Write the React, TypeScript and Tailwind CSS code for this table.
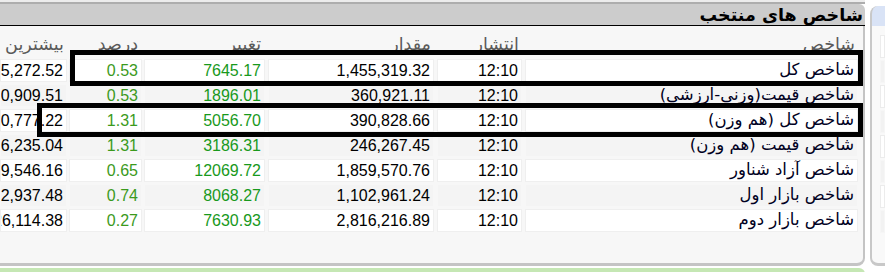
import React from "react";

interface IndexRow {
    name: string;
    time: string;
    value: string;
    change: string;
    pct: string;
    max: string;
}

const rows: IndexRow[] = [
    { name: "شاخص کل", time: "12:10", value: "1,455,319.32", change: "7645.17", pct: "0.53", max: "1,465,272.52" },
    { name: "شاخص قیمت(وزنی-ارزشی)", time: "12:10", value: "360,921.11", change: "1896.01", pct: "0.53", max: "360,909.51" },
    { name: "شاخص کل (هم وزن)", time: "12:10", value: "390,828.66", change: "5056.70", pct: "1.31", max: "390,777.22" },
    { name: "شاخص قیمت (هم وزن)", time: "12:10", value: "246,267.45", change: "3186.31", pct: "1.31", max: "246,235.04" },
    { name: "شاخص آزاد شناور", time: "12:10", value: "1,859,570.76", change: "12069.72", pct: "0.65", max: "1,869,546.16" },
    { name: "شاخص بازار اول", time: "12:10", value: "1,102,961.24", change: "8068.27", pct: "0.74", max: "1,102,937.48" },
    { name: "شاخص بازار دوم", time: "12:10", value: "2,816,216.89", change: "7630.93", pct: "0.27", max: "2,826,114.38" },
];

const num = "font-['Liberation_Sans','DejaVu_Sans',sans-serif] text-[16px]";

function Cell({ className, children, odd }: { className: string; children: React.ReactNode; odd: boolean }) {
    return (
        <div
            className={`${className} shrink-0 h-[23px] flex items-center justify-start overflow-hidden whitespace-nowrap pr-[3px] border ${
                odd ? "bg-[#f4f4f4] border-[#f7f7f7]" : "bg-white border-[#efefef]"
            }`}
        >
            {children}
        </div>
    );
}

export default function App() {
    return (
        <div className="relative w-[885px] h-[272px] overflow-hidden bg-white font-['DejaVu_Sans',sans-serif]">
            <div className="flex h-[266px]">
                {/* main panel */}
                <div className="w-[865px] shrink-0 flex flex-col">
                    <div className="h-[4px] bg-[#ececec] border-b-2 border-[#adadad]" />
                    <div
                        dir="rtl"
                        className="h-[22px] bg-[#cccccc] border-b border-black rounded-tr-[6px] flex items-center pr-[2px]"
                    >
                        <span className="text-[17.5px] font-bold text-black leading-none pt-[2px]">شاخص های منتخب</span>
                    </div>
                    <div
                        dir="rtl"
                        className="flex-1 bg-[#f7f7f7] border-r-2 border-b-[3px] border-[#c4c4c4] rounded-br-[8px] pr-[5px] overflow-hidden"
                    >
                        {/* column headings */}
                        <div className="flex h-[31px] items-end text-right text-[17.5px] leading-[26px] text-[#5a5a5a] overflow-hidden">
                            <div className="w-[333px] shrink-0 pr-[3px]">شاخص</div>
                            <div className="w-[85px] ms-[3px] shrink-0 pr-[3px]">انتشار</div>
                            <div className="w-[166px] ms-[3px] shrink-0 pr-[3px]">مقدار</div>
                            <div className="w-[121px] ms-[3px] shrink-0 pr-[4px]">تغییر</div>
                            <div className="w-[73px] ms-[2px] shrink-0 pr-[4px]">درصد</div>
                            <div className="w-[67px] ms-[2px] shrink-0 pr-[3px] whitespace-nowrap overflow-hidden">بیشترین</div>
                        </div>
                        <div className="flex flex-col gap-[2px] mt-[2px]">
                            {rows.map((r, i) => (
                                <div key={r.name} className="flex">
                                    <Cell className="w-[333px] text-[16.5px] text-[#000022]" odd={i % 2 === 1}>
                                        <span>{r.name}</span>
                                    </Cell>
                                    <Cell className={`w-[85px] ms-[3px] ${num} text-black`} odd={i % 2 === 1}>
                                        <span dir="ltr">{r.time}</span>
                                    </Cell>
                                    <Cell className={`w-[166px] ms-[3px] ${num} text-black`} odd={i % 2 === 1}>
                                        <span dir="ltr">{r.value}</span>
                                    </Cell>
                                    <Cell className={`w-[121px] ms-[3px] ${num} text-[#18991c]`} odd={i % 2 === 1}>
                                        <span dir="ltr">{r.change}</span>
                                    </Cell>
                                    <Cell className={`w-[73px] ms-[2px] ${num} text-[#3b9a1c]`} odd={i % 2 === 1}>
                                        <span dir="ltr">{r.pct}</span>
                                    </Cell>
                                    <Cell className={`w-[67px] ms-[2px] ${num} text-black`} odd={i % 2 === 1}>
                                        <span dir="ltr">{r.max}</span>
                                    </Cell>
                                </div>
                            ))}
                        </div>
                    </div>
                </div>

                {/* neighbouring panel, mostly off screen */}
                <div className="ml-[5px] flex-1 flex flex-col">
                    <div className="h-[6px]" />
                    <div className="h-[20px] bg-[#d9e3f6] border-l-2 border-[#c8c8c8] rounded-tl-[8px]" />
                    <div className="flex-1 bg-[#f9f9f9] border-l-2 border-b-[3px] border-[#c8c8c8] rounded-bl-[8px] pl-[8px] pt-[9px] flex flex-col gap-[2px]">
                        {Array.from({ length: 8 }).map((_, i) => (
                            <div
                                key={i}
                                className={`h-[23px] border ${i % 2 === 1 ? "bg-[#f2f2f2] border-[#f6f6f6]" : "bg-white border-[#ececec]"}`}
                            />
                        ))}
                    </div>
                </div>
            </div>

            {/* next panel heading, cut off at the bottom */}
            <div className="mt-[2px] w-[865px] h-[22px] bg-[#c5e7b4] rounded-tr-[6px] flex justify-start pr-[3px]" dir="rtl">
                <span className="text-[17.5px] font-bold text-black leading-[26px]">شاخص های صنعت</span>
            </div>

            {/* annotation boxes */}
            <div className="absolute left-[70px] top-[50px] w-[793px] h-[36px] border-[5px] border-black" />
            <div className="absolute left-[37px] top-[103px] w-[826px] h-[34px] border-[5px] border-black" />
        </div>
    );
}
